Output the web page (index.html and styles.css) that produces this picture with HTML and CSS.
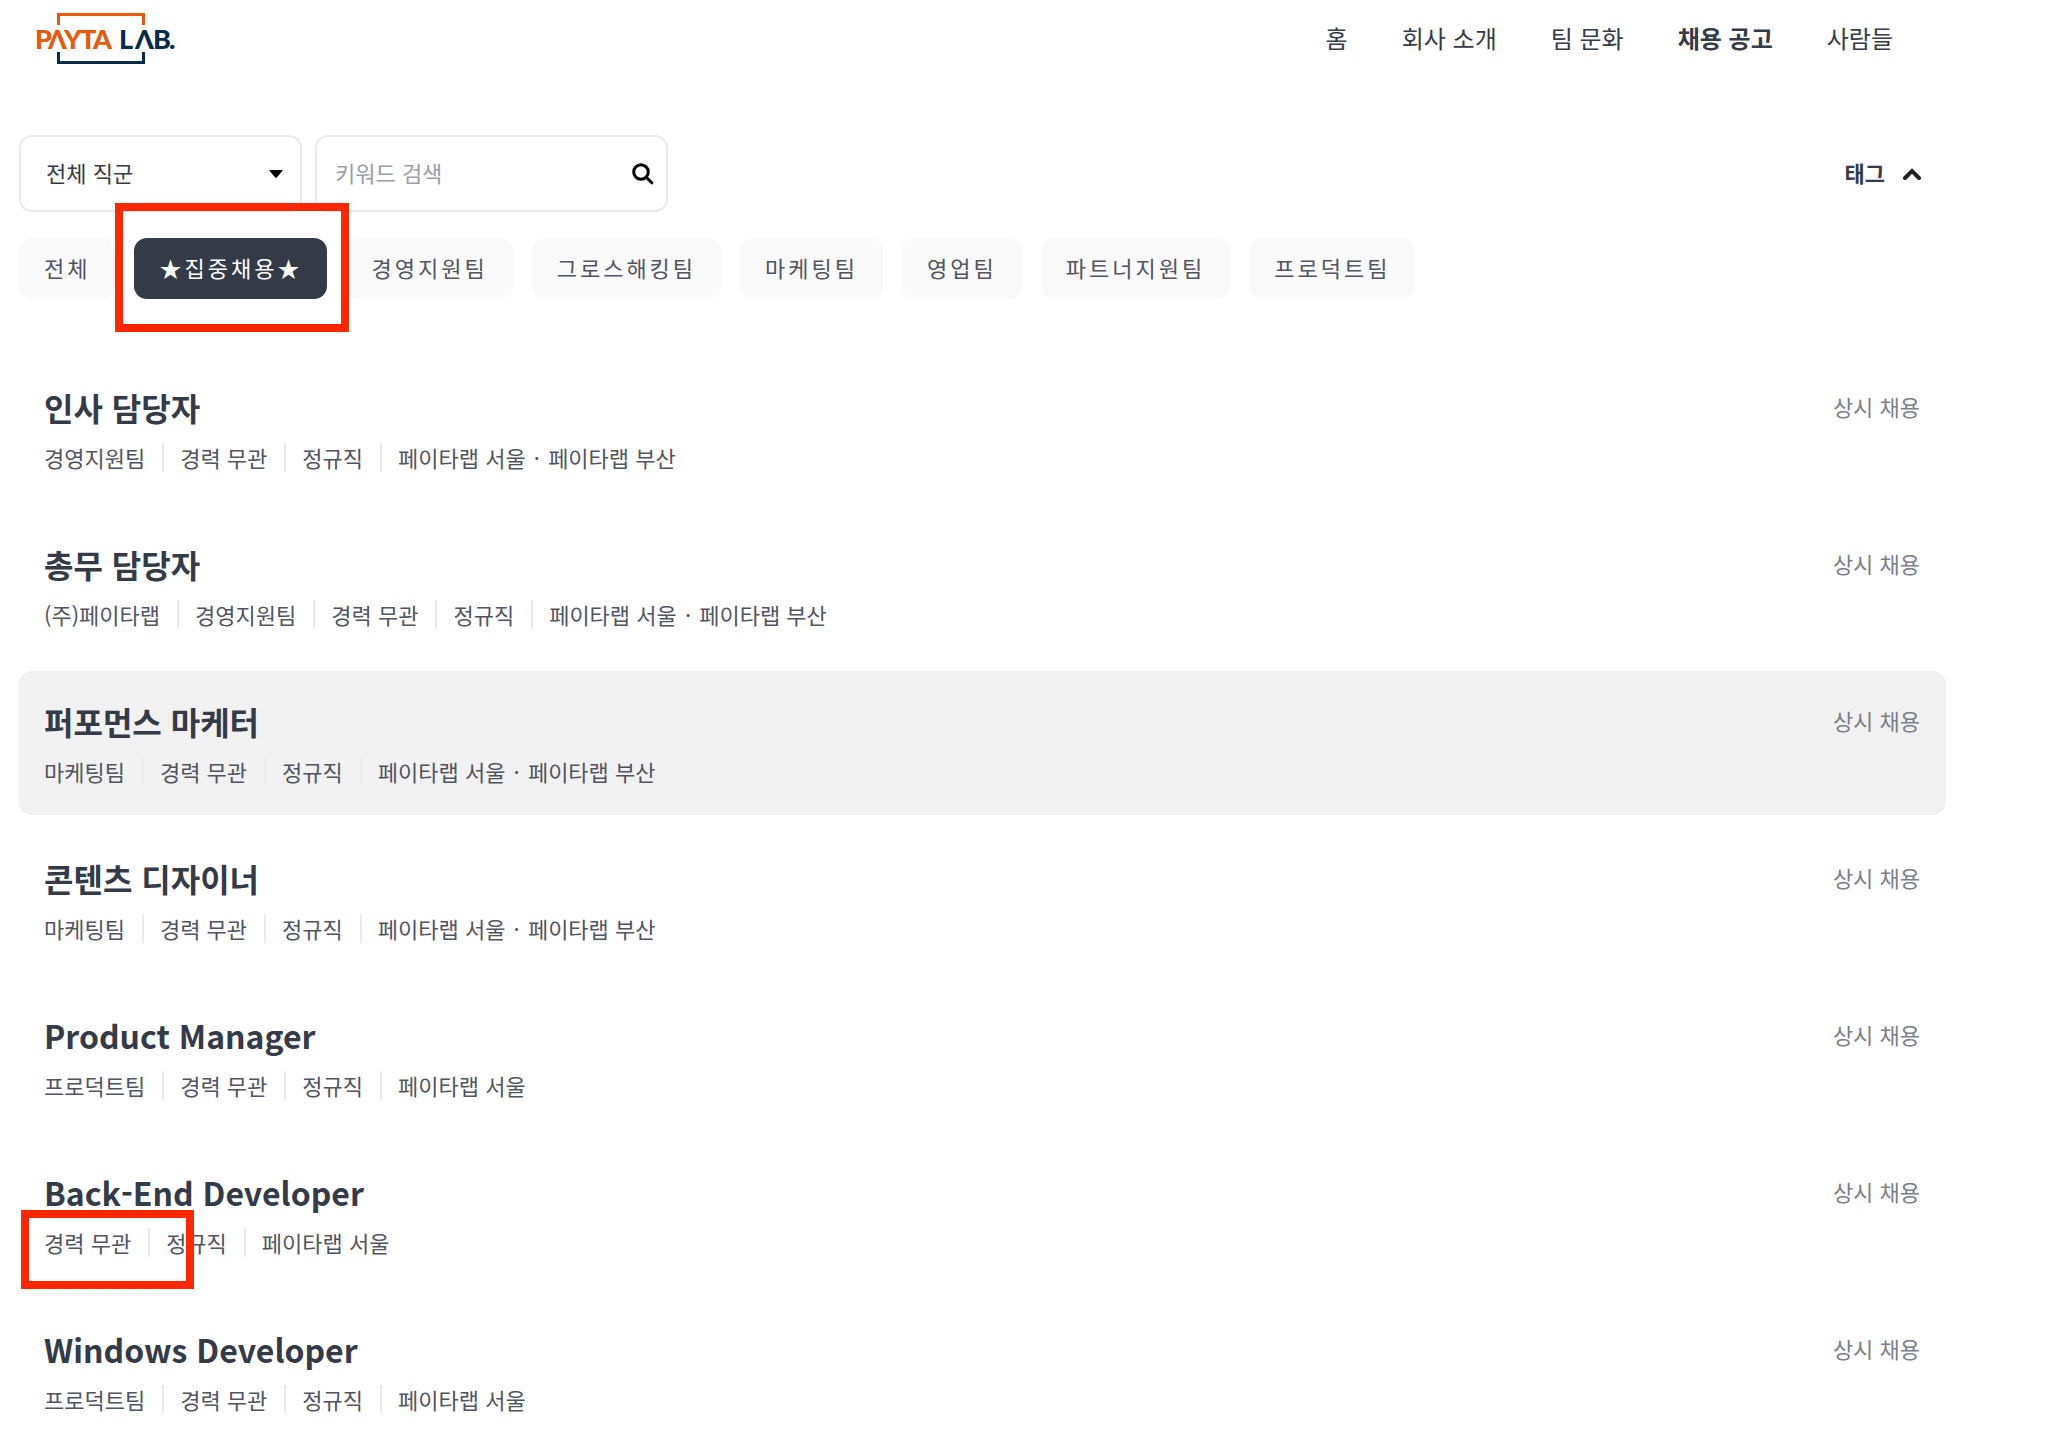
FILE: index.html
```html
<!DOCTYPE html>
<html lang="ko">
<head>
<meta charset="utf-8">
<meta name="viewport" content="width=device-width, initial-scale=1">
<title>채용 공고</title>
<link rel="stylesheet" href="styles.css">
</head>
<body>
<header class="header">
  <a class="logo" href="#" aria-label="PAYTA LAB.">
    <svg width="142" height="52" viewBox="0 0 142 52" aria-hidden="true">
      <path class="logo-frame-top" d="M23.500 12V1.500H108.500V12"/>
      <path class="logo-frame-bottom" d="M23.500 39V49.500H108.500V39"/>
      <text class="logo-name" x="0 13 29 45 58" y="36">PΛYTA</text>
      <text class="logo-lab" x="84 100 118 134" y="36">LΛB.</text>
    </svg>
  </a>
  <nav class="nav">
    <a href="#">홈</a>
    <a href="#">회사 소개</a>
    <a href="#">팀 문화</a>
    <a class="current" href="#" aria-current="page">채용 공고</a>
    <a href="#">사람들</a>
  </nav>
</header>
<main class="main">
  <form class="filters">
    <div class="select-box">
      <select aria-label="직군">
        <option>전체 직군</option>
      </select>
      <svg class="caret" width="14" height="8" viewBox="0 0 14 8" aria-hidden="true"><path d="M1 0h12q1 0 .4 .9L8 7.300q-1 1-2 0L.6 .9Q0 0 1 0z"/></svg>
    </div>
    <div class="search-box">
      <input type="text" placeholder="키워드 검색" aria-label="키워드 검색">
      <button class="search-button" type="button" aria-label="검색">
        <svg width="22" height="22" viewBox="0 0 22 22"><circle cx="9" cy="9" r="7.300"/><path d="M14.500 14.500L19.800 19.800"/></svg>
      </button>
    </div>
    <button class="tag-toggle" type="button" aria-expanded="true"><span>태그</span>
      <svg width="18" height="12" viewBox="0 0 18 12" aria-hidden="true"><path d="M2 10L9 3L16 10"/></svg>
    </button>
  </form>
  <div class="chips">
    <button class="chip" type="button">전체</button>
    <button class="chip selected" type="button">★집중채용★<span class="mark mark-chip"></span></button>
    <button class="chip" type="button">경영지원팀</button>
    <button class="chip" type="button">그로스해킹팀</button>
    <button class="chip" type="button">마케팅팀</button>
    <button class="chip" type="button">영업팀</button>
    <button class="chip" type="button">파트너지원팀</button>
    <button class="chip" type="button">프로덕트팀</button>
  </div>
  <ul class="jobs">
    <li><a class="job" href="#">
      <div><h2>인사 담당자</h2>
      <div class="meta"><span>경영지원팀</span><span>경력 무관</span><span>정규직</span><span>페이타랩 서울 <b>·</b> 페이타랩 부산</span></div></div>
      <span class="due">상시 채용</span>
    </a></li>
    <li><a class="job" href="#">
      <div><h2>총무 담당자</h2>
      <div class="meta"><span>(주)페이타랩</span><span>경영지원팀</span><span>경력 무관</span><span>정규직</span><span>페이타랩 서울 <b>·</b> 페이타랩 부산</span></div></div>
      <span class="due">상시 채용</span>
    </a></li>
    <li><a class="job active" href="#">
      <div><h2>퍼포먼스 마케터</h2>
      <div class="meta"><span>마케팅팀</span><span>경력 무관</span><span>정규직</span><span>페이타랩 서울 <b>·</b> 페이타랩 부산</span></div></div>
      <span class="due">상시 채용</span>
    </a></li>
    <li><a class="job" href="#">
      <div><h2>콘텐츠 디자이너</h2>
      <div class="meta"><span>마케팅팀</span><span>경력 무관</span><span>정규직</span><span>페이타랩 서울 <b>·</b> 페이타랩 부산</span></div></div>
      <span class="due">상시 채용</span>
    </a></li>
    <li><a class="job" href="#">
      <div><h2>Product Manager</h2>
      <div class="meta"><span>프로덕트팀</span><span>경력 무관</span><span>정규직</span><span>페이타랩 서울</span></div></div>
      <span class="due">상시 채용</span>
    </a></li>
    <li><a class="job" href="#">
      <div><h2>Back-End Developer</h2>
      <div class="meta"><span>경력 무관</span><span>정규직</span><span>페이타랩 서울</span><i class="mark mark-meta"></i></div></div>
      <span class="due">상시 채용</span>
    </a></li>
    <li><a class="job" href="#">
      <div><h2>Windows Developer</h2>
      <div class="meta"><span>프로덕트팀</span><span>경력 무관</span><span>정규직</span><span>페이타랩 서울</span></div></div>
      <span class="due">상시 채용</span>
    </a></li>
  </ul>
</main>
</body>
</html>
```
FILE: styles.css
```css
* {
  box-sizing: border-box;
}

body {
  margin: 0;
  background: #fff;
  color: #343a46;
  font-family: "Noto Sans CJK KR", sans-serif;
  font-size: 22px;
}

a {
  color: inherit;
  text-decoration: none;
}

button,
input,
select {
  margin: 0;
  border: 0;
  background: none;
  color: inherit;
  font: inherit;
}

/* Header */
.header {
  display: flex;
  align-items: center;
  justify-content: space-between;
  height: 78px;
  padding: 0 155px 0 35px;
}

.logo svg {
  display: block;
}

.logo-frame-top,
.logo-frame-bottom {
  fill: none;
  stroke-width: 3px;
}

.logo-frame-top {
  stroke: #e8590c;
}

.logo-frame-bottom {
  stroke: #0a2a4a;
}

.logo-name,
.logo-lab {
  font-family: Lato, sans-serif;
  font-size: 27px;
  font-weight: 900;
}

.logo-name {
  fill: #e8590c;
}

.logo-lab {
  fill: #0a2a4a;
}

.nav {
  display: flex;
  gap: 54px;
  padding-bottom: 2px;
  font-size: 24px;
  line-height: 36px;
}

.current {
  font-weight: 700;
}

/* Filters */
.main {
  padding: 57px 102px 10px 19px;
}

.filters {
  display: flex;
  align-items: center;
  gap: 13px;
}

.select-box,
.search-box {
  display: flex;
  position: relative;
  height: 77px;
  border: 2px solid #e9eaec;
  border-radius: 13px;
}

.select-box {
  width: 283px;
}

.search-box {
  width: 353px;
  align-items: center;
  padding-right: 12px;
}

.select-box select {
  width: 100%;
  padding: 0 25px 3px;
  appearance: none;
}

.caret {
  position: absolute;
  top: 33px;
  right: 17px;
  pointer-events: none;
}

.search-box input {
  flex: 1;
  min-width: 0;
  height: 100%;
  padding: 0 18px 3px;
}

.search-box input::placeholder {
  color: #9a9da8;
  opacity: 1;
}

.search-button {
  display: flex;
  padding: 0;
}

.search-button svg {
  fill: none;
  stroke: #000;
  stroke-width: 3px;
  stroke-linecap: round;
}

.tag-toggle {
  display: flex;
  align-items: center;
  gap: 18px;
  margin-left: auto;
  padding: 0 25px;
  font-weight: 700;
}

.tag-toggle span {
  padding-bottom: 3px;
}

.tag-toggle svg {
  fill: none;
  stroke: #222;
  stroke-width: 4px;
  stroke-linecap: round;
}

/* Team chips */
.chips {
  display: flex;
  gap: 19px;
  margin-top: 26px;
}

.chip {
  height: 61px;
  padding: 0 25px 3px;
  border-radius: 13px;
  background: #f9f9f9;
  color: #50545f;
  letter-spacing: 3px;
  white-space: nowrap;
}

.chip.selected {
  position: relative;
  z-index: 1;
  background: #343a46;
  color: #fff;
}

/* Highlight rectangles */
.mark {
  position: absolute;
  border: 8px solid #ff2600;
  pointer-events: none;
}

.mark-chip {
  top: -35px;
  left: -19px;
  width: 234px;
  height: 129px;
}

.mark-meta {
  top: -18px;
  left: -23px;
  width: 173px;
  height: 79px;
}

/* Job list */
.jobs {
  display: grid;
  gap: 13px;
  margin: 58px 0 0;
  padding: 0;
  list-style: none;
}

.job {
  display: flex;
  justify-content: space-between;
  padding: 26px 26px 29px 25px;
  border-radius: 13px;
}

.job.active {
  background: #f1f1f1;
}

.job h2 {
  margin: 0 0 12px;
  font-size: 32px;
  font-weight: 700;
  line-height: 48px;
}

.meta {
  display: flex;
  position: relative;
  color: #50545f;
  line-height: 29px;
}

.meta span + span {
  margin-left: 17px;
  padding-left: 16px;
  border-left: 2px solid #e9eaec;
}

.meta b {
  margin: 0 2px;
  font-weight: 400;
}

.due {
  color: #7b7f8a;
  line-height: 46px;
}
```
